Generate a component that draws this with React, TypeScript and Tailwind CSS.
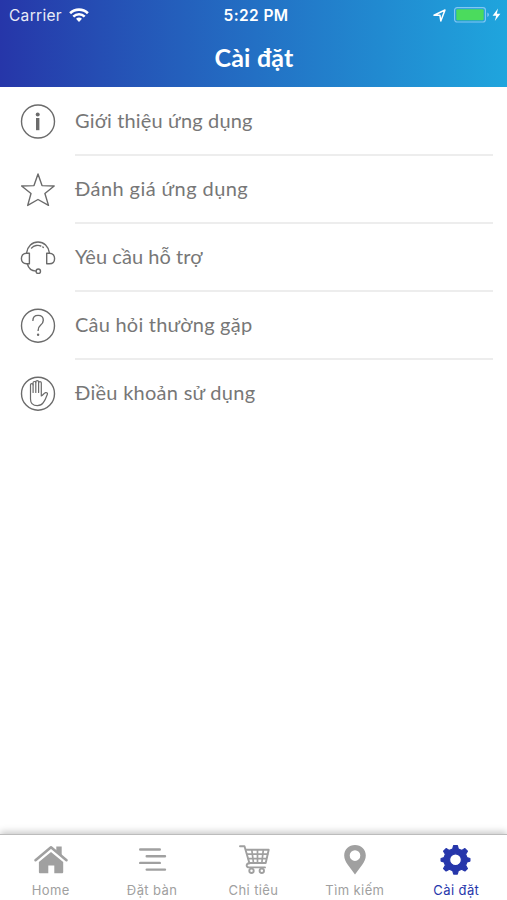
import type { ReactNode } from "react";

const MENU_ITEMS: { label: string; icon: ReactNode; className: string }[] = [
  { label: "Giới thiệu ứng dụng", icon: <InfoIcon />, className: "tracking-[0.15px]" },
  { label: "Đánh giá ứng dụng", icon: <StarIcon />, className: "tracking-[0.42px]" },
  { label: "Yêu cầu hỗ trợ", icon: <HeadsetIcon />, className: "tracking-[0.05px]" },
  { label: "Câu hỏi thường gặp", icon: <QuestionIcon />, className: "tracking-[0.22px]" },
  { label: "Điều khoản sử dụng", icon: <HandIcon />, className: "tracking-[0.27px]" },
];

const TABS: { label: string; icon: ReactNode }[] = [
  { label: "Home", icon: <HomeIcon /> },
  { label: "Đặt bàn", icon: <LinesIcon /> },
  { label: "Chi tiêu", icon: <CartIcon /> },
  { label: "Tìm kiếm", icon: <PinIcon /> },
  { label: "Cài đặt", icon: <GearIcon /> },
];

const lineIcon = {
  width: 36,
  height: 36,
  viewBox: "0 0 36 36",
  fill: "none",
  stroke: "currentColor",
  strokeWidth: 1.4,
  strokeLinecap: "round" as const,
  strokeLinejoin: "round" as const,
};

const tabIcon = {
  width: 36,
  height: 32,
  viewBox: "0 0 36 32",
  fill: "currentColor",
};

function InfoIcon() {
  return (
    <svg {...lineIcon}>
      <circle cx="18" cy="17.5" r="16.5" />
      <circle cx="17.7" cy="10.5" r="2" fill="currentColor" stroke="none" />
      <path d="M17.7 14v12.2" strokeWidth="3.4" strokeLinecap="butt" />
    </svg>
  );
}

function StarIcon() {
  return (
    <svg {...lineIcon}>
      <path d="M18 2 22 13.6 34.2 14 24.9 21.5 28.5 33.4 18 27.5 7.7 33.4 11 21.5 1.6 14 14 13.6Z" />
    </svg>
  );
}

function HeadsetIcon() {
  return (
    <svg {...lineIcon}>
      <path d="M6.6 12.8C7.5 6.4 12 2 18 2s10.5 4.4 11.4 10.8" />
      <path d="M11.5 8.1C14 5.3 18.3 4.8 20.8 6M22.8 7l.5.4" />
      <path d="M9.4 13.2v10.6H6.6C3.2 23.8 1.4 21.6 1.4 18.5s1.8-5.3 5.2-5.3Z" />
      <path d="M26.7 13.2v10.6h2.7c3.4 0 5.2-2.2 5.2-5.3s-1.8-5.3-5.2-5.3Z" />
      <path d="M7.4 24C8.5 28.3 11.5 30.9 16 31.1" />
      <circle cx="18.3" cy="31.2" r="2.2" />
    </svg>
  );
}

function QuestionIcon() {
  return (
    <svg {...lineIcon}>
      <circle cx="18" cy="17.7" r="16.5" />
      <path d="M12.9 12.4c0-3.100 2.100-5 5.200-5s5.200 2 5.200 4.900c0 2.500-1.200 3.700-2.800 5-1.700 1.400-2.400 2.300-2.400 5.100" />
      <circle cx="18.1" cy="26.7" r="1.2" fill="currentColor" stroke="none" />
    </svg>
  );
}

function HandIcon() {
  return (
    <svg {...lineIcon}>
      <circle cx="18" cy="17.7" r="16.5" />
      <g strokeWidth="1.200">
        <path d="M10.500 23V8.800c0-1.500 2.600-1.500 2.600 0V6.600c0-1.500 2.700-1.500 2.700 0V5.800c0-1.600 2.800-1.600 2.800 0v.9c0-1.500 2.700-1.500 2.700 0V20c1.500-.5 2.400-2.800 4.300-3.300 1.300-.3 2.200.4 1.800 1.500-1 2.700-2.200 5.800-4.100 8.500-1.500 2.200-3.300 3-5.900 3-4.400 0-6.900-2.700-6.900-6.700Z" />
        <path d="M13.100 8.800v7.700M15.800 6.600v9.900M18.600 6.700v9.800" />
      </g>
    </svg>
  );
}

function HomeIcon() {
  return (
    <svg {...tabIcon}>
      <path d="M23.3 2.5h5.4V12l-5.4-4.7Z" />
      <path d="M2.5 16.2 18 3.3l15.5 12.9" fill="none" stroke="currentColor" strokeWidth="2.6" strokeLinecap="round" strokeLinejoin="round" />
      <path d="M18 8 30.2 18v10c0 .8-.5 1.3-1.3 1.3h-7.600v-7.800h-6v7.800H7.200c-.8 0-1.300-.5-1.300-1.300V18Z" />
    </svg>
  );
}

function LinesIcon() {
  return (
    <svg {...tabIcon} fill="none" stroke="currentColor" strokeWidth="2.4" strokeLinecap="round">
      <path d="M6.2 5.500h19.600M12.700 12.200H31M6.200 18.900h19.600M12.700 25.600H31" />
    </svg>
  );
}

function CartIcon() {
  return (
    <svg {...tabIcon} fill="none" stroke="currentColor" strokeWidth="1.9" strokeLinecap="round" strokeLinejoin="round">
      <path d="M5 2.2h4.500l5 17.200" />
      <path d="M10.800 5.800h22.900l-3 13.200H14.500" />
      <path d="M12 10.200h20.500M13.200 14.600h18M16.800 5.800l1.700 13.200M22.500 5.800V19M28.300 5.800l-1.500 13.200" strokeWidth="1.7" />
      <path d="M14.100 19.200c-3.200.3-3.300 4.200-.1 4.200h16" />
      <circle cx="16.500" cy="26.800" r="2.200" fill="#fff" />
      <circle cx="26.800" cy="26.800" r="2.200" fill="#fff" />
    </svg>
  );
}

function PinIcon() {
  return (
    <svg {...tabIcon}>
      <path fillRule="evenodd" d="M18 1C11.800 1 7.200 5.500 7.200 11.400c0 3.300 1.600 6.200 3.400 9L18 30.500l7.400-10.100c1.800-2.800 3.400-5.700 3.400-9C28.800 5.500 24.200 1 18 1Zm0 5.300a5.300 5.300 0 1 1 0 10.600 5.300 5.300 0 0 1 0-10.600Z" />
    </svg>
  );
}

function GearIcon() {
  return (
    <svg {...tabIcon}>
      <g transform="translate(17.500 15.700)">
        <path
          fillRule="evenodd"
          stroke="currentColor"
          strokeWidth="1.2"
          strokeLinejoin="round"
          d="M-1.800-14.200h3.600l1 3.500 3.400 1.400 3.200-1.800 2.500 2.500-1.800 3.200 1.400 3.400 2.900.8v2.600l-2.900.8-1.400 3.400 1.800 3.200-2.500 2.500-3.200-1.800-3.400 1.400-1 3.500h-3.600l-1-3.500-3.400-1.400-3.200 1.800-2.500-2.500 1.800-3.200-1.400-3.400-2.900-.8v-2.600l2.900-.8 1.400-3.400-1.800-3.200 2.500-2.500 3.200 1.800 3.400-1.400ZM0-5.900a5.900 5.900 0 1 0 0 11.800 5.900 5.900 0 0 0 0-11.800Z"
        />
      </g>
    </svg>
  );
}

function StatusBar() {
  return (
    <div className="flex h-[30px] items-center justify-between pr-[6px] pl-[9px] font-['Inter',sans-serif] text-white">
      <div className="flex w-[170px] items-center gap-[7px]">
        <span className="pt-[2px] text-[15.5px] tracking-[0.3px] opacity-90">Carrier</span>
        <svg width="20" height="15" viewBox="0 0 20 15" fill="none" stroke="currentColor" strokeWidth="2.6">
          <path d="M1.1 5.200a12.800 12.800 0 0 1 17.800 0M4.300 8.600a8.200 8.200 0 0 1 11.400 0" />
          <path d="m10 14-3-3.200a4.400 4.400 0 0 1 6 0Z" fill="currentColor" stroke="none" />
        </svg>
      </div>
      <span className="pt-[2px] pl-[2px] text-[15.5px] font-semibold tracking-[0.4px]">5:22 PM</span>
      <div className="flex w-[170px] items-center justify-end">
        <svg width="13" height="13" viewBox="0 0 13 13" fill="none" stroke="currentColor" strokeWidth="1.5" strokeLinejoin="round" className="mr-[8px]">
          <path d="M1 6.200 12 1 7.800 12 6.900 6.200Z" />
        </svg>
        <svg width="47" height="16" viewBox="0 0 47 16">
          <rect x=".6" y=".6" width="30.8" height="14.4" rx="2.5" fill="none" stroke="#82c7f3" strokeWidth="1.2" />
          <rect x="2.3" y="2.3" width="27.4" height="11" rx="1" fill="#4bdb5d" />
          <path d="M33.3 5.600c2.200.8 2.200 3.600 0 4.400Z" fill="#82c7f3" />
          <path d="M44 1.500 38.600 8.800h3.600L40.800 14l5.600-7.300h-3.600Z" fill="#fff" />
        </svg>
      </div>
    </div>
  );
}

export default function App() {
  return (
    <div className="flex h-[900px] w-[507px] flex-col overflow-hidden bg-white">
      <header className="h-[87px] shrink-0 bg-linear-to-r from-[#2636a9] to-[#1fa5dd]">
        <StatusBar />
        <h1 className="mt-[10px] pl-px text-center font-['Lato','Noto_Sans',sans-serif] text-[25px] leading-[34px] font-bold tracking-[0.2px] text-white">
          Cài đặt
        </h1>
      </header>

      <main className="flex-1 pt-px">
        {MENU_ITEMS.map((item, i) => (
          <div key={item.label} className="flex h-[68px] items-center pr-[14px] pl-[20px] text-[#6b6b6b]">
            <span className="w-[55px] shrink-0">{item.icon}</span>
            <div
              className={
                i < MENU_ITEMS.length - 1
                  ? "flex h-full flex-1 items-center border-b-2 border-[#ededed]"
                  : "flex h-full flex-1 items-center border-b-2 border-transparent"
              }
            >
              <span className={`pb-[2px] font-['Lato','Noto_Sans',sans-serif] text-[20px] text-[#777] ${item.className}`}>{item.label}</span>
            </div>
          </div>
        ))}
      </main>

      <nav className="grid h-[66px] shrink-0 grid-cols-5 border-t border-[#bcbcbc] bg-white shadow-[0_-2px_7px_rgba(0,0,0,0.23)]">
        {TABS.map((tab, i) => (
          <button
            key={tab.label}
            className={
              i === TABS.length - 1
                ? "flex flex-col items-center pt-[9px] text-[#2636ab]"
                : "flex flex-col items-center pt-[9px] text-[#a0a0a0]"
            }
          >
            {tab.icon}
            <span className="mt-[5px] font-['Inter',sans-serif] text-[13px] leading-[18px] tracking-[0.4px]">{tab.label}</span>
          </button>
        ))}
      </nav>
    </div>
  );
}
